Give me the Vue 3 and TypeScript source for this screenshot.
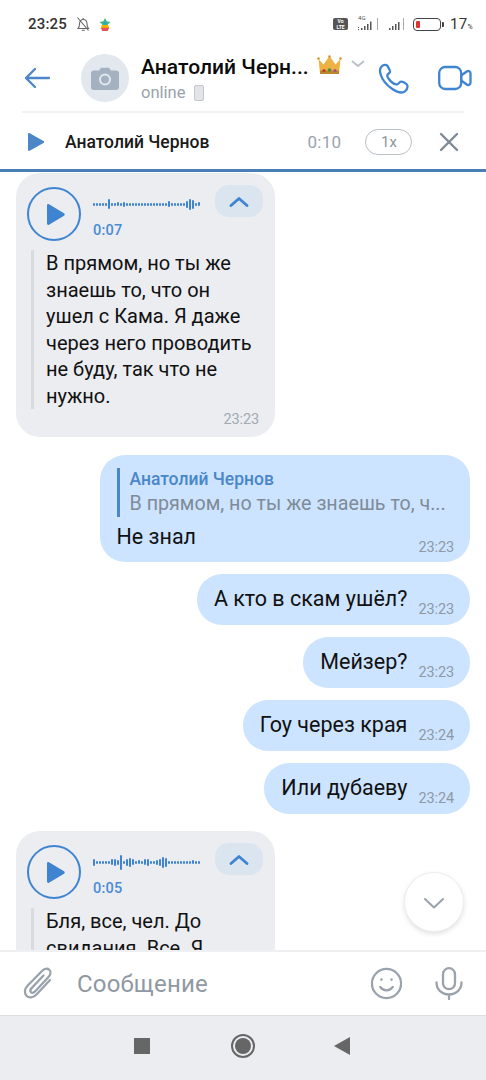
<script setup lang="ts">
const wave1: number[] = [3,3,3,3,3,10,3,3,4,3,5,3,3,3,3,3,3,3,3,3,3,3,3,3,3,6,3,3,3,3,3,7,11,9,3,4]
const wave2: number[] = [7,3,3,3,3,3,6,7,5,15,3,7,9,6,3,4,3,6,7,3,3,5,7,11,9,3,3,3,3,3,3,3,3,4,3,3]
interface Msg { text: string; time: string }
const outgoing: Msg[] = [
  { text: 'А кто в скам ушёл?', time: '23:23' },
  { text: 'Мейзер?', time: '23:23' },
  { text: 'Гоу через края', time: '23:24' },
  { text: 'Или дубаеву', time: '23:24' },
]
</script>

<template>
  <div class="phone">
    <div class="status">
      <div class="status-left">
        <span class="clock">23:25</span>
        <svg width="16" height="16" viewBox="0 0 16 16" fill="none" stroke="#666" stroke-width="1.1">
          <path d="M3 12.500c1.200-1.300 1.500-2.500 1.500-4.500 0-2.600 1.500-4.500 3.700-4.500S12 5.400 12 8c0 2 .4 3.200 1.500 4.500zM6.800 14.300h3M8.200 2v1.500M2.500 1.500l11 13"/>
        </svg>
        <svg class="play-logo" width="12" height="13" viewBox="0 0 13 14">
          <path d="M6.500 0l1.800 3.600 4 .6-2.900 2.800.7 3.500H2.900l.7-3.500L.7 4.200l4-.6z" fill="#3cb878"/>
          <path d="M3 7.500h7l1 3.500H2z" fill="#f4b400"/>
          <path d="M2 10.500h9L9.500 14h-6z" fill="#e8505b"/>
          <path d="M5 4h3v3H5z" fill="#2aa5d8"/>
        </svg>
      </div>
      <div class="status-right">
        <span class="volte">Vo<br />LTE</span>
        <span class="net"><i>4G</i><svg width="26" height="14" viewBox="0 0 26 14" fill="#555"><path d="M1 10h1v1H1zM1 12h1v1H1zM4 11h1.500v2H4zM7 9h1.500v4H7zM10 7h1.500v6H10zM13 4.500h1.500V13H13z"/><path d="M20 1h1v12h-1z" fill="#aaa"/></svg></span>
        <svg width="19" height="14" viewBox="0 0 19 14" fill="#555"><path d="M1 11h1.500v2H1zM4 9h1.500v4H4zM7 7h1.500v6H7zM10 5h1.500v8H10z"/><path d="M15 1h1v12h-1z" fill="#aaa"/></svg>
        <span class="battery"><span class="battery-level"></span></span>
        <span class="battery-cap"></span>
        <span class="percent">17<small>%</small></span>
      </div>
    </div>

    <header class="header">
      <svg class="back" width="28" height="28" viewBox="0 0 28 28" fill="none" stroke="#4a86c8" stroke-width="2.300" stroke-linecap="round" stroke-linejoin="round">
        <path d="M26 14H3M12 5l-9 9 9 9"/>
      </svg>
      <div class="avatar">
        <svg width="28" height="23" viewBox="0 0 28 23">
          <path d="M3 3.500h5L10 .8h8l2 2.700h5a3 3 0 0 1 3 3V20a3 3 0 0 1-3 3H3a3 3 0 0 1-3-3V6.500a3 3 0 0 1 3-3z" fill="#a3b1c1"/>
          <circle cx="14" cy="12.500" r="5" fill="none" stroke="#e3e8ee" stroke-width="2"/>
        </svg>
      </div>
      <div class="who">
        <div class="name-row">
          <span class="name">Анатолий Черн...</span>
          <svg class="crown" width="25" height="20" viewBox="0 0 25 20">
            <path d="M1.500 4l5 5.500L12.500 1l6 8.500 5-5.500-1.500 14.500H3z" fill="#eeb244"/>
            <path d="M3 15.500h19v3.500H3z" fill="#b8862b"/>
            <circle cx="7" cy="15.500" r="1.600" fill="#c0392b"/>
            <circle cx="12.500" cy="15" r="1.800" fill="#4a8f3c"/>
            <circle cx="18" cy="15.500" r="1.600" fill="#b04a8a"/>
            <circle cx="1.500" cy="3.500" r="1.300" fill="#d9962c"/>
            <circle cx="12.500" cy="1.500" r="1.300" fill="#d9962c"/>
            <circle cx="23.500" cy="3.500" r="1.300" fill="#d9962c"/>
          </svg>
          <svg class="caret" width="14" height="8" viewBox="0 0 14 8" fill="none" stroke="#b9bfc6" stroke-width="1.800" stroke-linecap="round" stroke-linejoin="round">
            <path d="M1.500 1.500L7 6l5.500-4.500"/>
          </svg>
        </div>
        <div class="online">online<span class="device"></span></div>
      </div>
      <svg class="call" width="32" height="32" viewBox="0 0 32 32" fill="none" stroke="#3f84d0" stroke-width="2.300" stroke-linejoin="round" stroke-linecap="round">
        <path d="M3.500 3.500c1.500-1.500 3.500-1.800 5-1.300 1.200.4 3.800 5.300 3.500 6.800-.3 1.300-2.500 1.800-2.700 3.300-.2 1.800 1.800 4.300 3.800 6.300s4.500 3 6.200 2.700c1.500-.2 2.200-2.600 3.500-2.700 1.800-.2 6.200 2.300 6.500 3.700.4 1.700-.3 4.500-2.300 6-2.500 1.900-7.600 1.100-13-2.500C8.500 22 4 16 2.500 11c-.8-2.800-.3-6 1-7.500z"/>
      </svg>
      <svg class="video" width="34" height="26" viewBox="0 0 34 26" fill="none" stroke="#3f84d0" stroke-width="2.300" stroke-linejoin="round">
        <rect x="1.200" y="2" width="22" height="22" rx="6"/>
        <path d="M23.200 10.500l5.500-4c1.800-1.200 3.800 0 3.800 2v9c0 2-2 3.200-3.800 2l-5.500-4z"/>
      </svg>
    </header>

    <div class="player">
      <svg class="player-play" width="16" height="18" viewBox="0 0 16 18"><path d="M0 1.200v15.600c0 1 .9 1.400 1.700 1L15.500 10c.7-.4.700-1.500 0-2L1.700.3C.9-.2 0 .2 0 1.200z" fill="#4a86c8"/></svg>
      <span class="player-name">Анатолий Чернов</span>
      <span class="player-time">0:10</span>
      <span class="speed">1x</span>
      <svg class="player-close" width="20" height="20" viewBox="0 0 20 20" stroke="#7f8a96" stroke-width="2.400" stroke-linecap="round"><path d="M2 2l16 16M18 2L2 18"/></svg>
    </div>

    <main class="list">
      <article class="voice first">
        <div class="voice-top">
          <span class="circle"><svg width="18" height="21" viewBox="0 0 18 21"><path d="M0 1.500v18c0 1.200 1 1.700 2 1.200l15-9c.9-.6.900-1.800 0-2.400L2 .3C1 -.2 0 .3 0 1.500z" fill="#3f84d0"/></svg></span>
          <div class="wave-col">
            <div class="wave"><i v-for="(h, i) in wave1" :key="i" :style="{ height: h + 'px' }"></i></div>
            <span class="dur">0:07</span>
          </div>
          <span class="collapse"><svg width="20" height="11" viewBox="0 0 20 11" fill="none" stroke="#3f84d0" stroke-width="2.800" stroke-linecap="round" stroke-linejoin="round"><path d="M2 9.500l8-7 8 7"/></svg></span>
        </div>
        <div class="transcript">В прямом, но ты же знаешь то, что он ушел с Кама. Я даже через него проводить не буду, так что не нужно.</div>
        <time class="stamp in">23:23</time>
      </article>

      <article class="bubble reply">
        <div class="quote">
          <div class="quote-name">Анатолий Чернов</div>
          <div class="quote-text">В прямом, но ты же знаешь то, ч...</div>
        </div>
        <div class="line"><span>Не знал</span><time class="stamp">23:23</time></div>
      </article>

      <article v-for="m in outgoing" :key="m.text" class="bubble short">
        <div class="line"><span>{{ m.text }}</span><time class="stamp">{{ m.time }}</time></div>
      </article>

      <article class="voice last">
        <div class="voice-top">
          <span class="circle"><svg width="18" height="21" viewBox="0 0 18 21"><path d="M0 1.500v18c0 1.200 1 1.700 2 1.200l15-9c.9-.6.900-1.800 0-2.400L2 .3C1 -.2 0 .3 0 1.500z" fill="#3f84d0"/></svg></span>
          <div class="wave-col">
            <div class="wave"><i v-for="(h, i) in wave2" :key="i" :style="{ height: h + 'px' }"></i></div>
            <span class="dur">0:05</span>
          </div>
          <span class="collapse"><svg width="20" height="11" viewBox="0 0 20 11" fill="none" stroke="#3f84d0" stroke-width="2.800" stroke-linecap="round" stroke-linejoin="round"><path d="M2 9.500l8-7 8 7"/></svg></span>
        </div>
        <div class="transcript">Бля, все, чел. До свидания. Все. Я</div>
      </article>

      <button class="to-bottom" type="button" aria-label="Вниз">
        <svg width="22" height="13" viewBox="0 0 22 13" fill="none" stroke="#99a2ad" stroke-width="2" stroke-linecap="round" stroke-linejoin="round"><path d="M2 2l9 8.500L20 2"/></svg>
      </button>
    </main>

    <footer class="composer">
      <svg width="32" height="34" viewBox="0 0 32 34" fill="none" stroke="#99a2ad" stroke-width="2.300" stroke-linecap="round" stroke-linejoin="round">
        <path d="M27 13L13.500 27.500c-3 3.200-7.500 3.800-10 1.300-2.500-2.500-2-6.800 1-10L19 4c2.300-2.400 5.500-3 7.300-1.200 1.900 1.900 1.300 5-1 7.500L12 24.500c-1.300 1.400-3 1.700-4 .7-1-1-.7-2.700.6-4.100L20.500 8.500"/>
      </svg>
      <span class="placeholder">Сообщение</span>
      <svg class="smile" width="33" height="33" viewBox="0 0 34 34" fill="none" stroke="#99a2ad" stroke-width="2.300" stroke-linecap="round">
        <circle cx="17" cy="17" r="15"/>
        <path d="M10.500 20.500c1.500 2.300 3.800 3.500 6.500 3.500s5-1.200 6.500-3.500"/>
        <circle cx="11.800" cy="13" r="1.300" fill="#99a2ad" stroke="none"/>
        <circle cx="22.200" cy="13" r="1.300" fill="#99a2ad" stroke="none"/>
      </svg>
      <svg class="mic" width="28" height="33" viewBox="0 0 28 33" fill="none" stroke="#99a2ad" stroke-width="2.300" stroke-linecap="round">
        <rect x="8" y="1.200" width="12" height="21" rx="6"/>
        <path d="M1.500 15.500c0 7 5.500 12 12.500 12s12.500-5 12.500-12M14 27.500V32"/>
      </svg>
    </footer>

    <nav class="nav">
      <span class="nav-square"></span>
      <span class="nav-home"><span></span></span>
      <span class="nav-back"></span>
    </nav>
  </div>
</template>

<style>
html, body { margin: 0; background: #fff; }
</style>

<style scoped>
.phone { position: relative; width: 486px; height: 1080px; overflow: hidden; background: #fff; font-family: Roboto, "Noto Sans", sans-serif; color: #111; display: flex; flex-direction: column; }

.status { height: 45px; box-sizing: border-box; padding: 3px 13px 0 28px; display: flex; justify-content: space-between; align-items: center; flex: none; }
.status-left { display: flex; align-items: center; gap: 8px; }
.clock { font-size: 15px; font-weight: 500; color: #333; letter-spacing: .2px; }
.play-logo { margin-left: 0; }
.status-right { display: flex; align-items: center; gap: 5px; }
.volte { width: 15px; height: 12px; border-radius: 2px; background: #555; color: #fff; font-size: 5px; line-height: 6px; font-weight: 700; text-align: center; margin-right: 4px; }
.net { position: relative; display: flex; }
.net i { position: absolute; left: 1px; top: -3px; font-size: 6px; font-style: normal; color: #555; }
.battery { width: 24px; height: 11px; border: 1.500px solid #444; border-radius: 4px; box-sizing: content-box; display: flex; align-items: center; padding-left: 2px; margin-left: 1px; }
.battery-level { width: 4px; height: 7px; background: #e0322f; border-radius: 1px; }
.battery-cap { width: 2px; height: 5px; background: #444; margin-left: -4px; border-radius: 0 1px 1px 0; }
.percent { font-size: 15px; color: #333; letter-spacing: .3px; margin-left: 1px; }
.percent small { font-size: 7px; }

.header { height: 68px; flex: none; box-sizing: border-box; margin: 0 22px; border-bottom: 2px solid #f0f1f3; display: flex; align-items: center; position: relative; }
.back { margin: 0 0 0 1px; flex: none; }
.avatar { width: 48px; height: 48px; border-radius: 50%; background: #e3e8ee; display: flex; align-items: center; justify-content: center; margin-left: 30px; flex: none; }
.who { margin-left: 12px; flex: 1; min-width: 0; padding-top: 1px; }
.name-row { display: flex; align-items: center; height: 27px; }
.name { font-size: 21px; font-weight: 500; color: #0b0b0b; white-space: nowrap; letter-spacing: .05px; }
.crown { margin-left: 8px; margin-top: -4px; flex: none; }
.caret { margin-left: 9px; margin-top: -7px; flex: none; }
.online { font-size: 16.500px; color: #99a2ad; display: flex; align-items: center; height: 22px; margin-top: 1px; }
.device { width: 8px; height: 14px; border: 1.500px solid #c4c8cd; background: #e2e4e7; border-radius: 2px; margin-left: 9px; box-sizing: content-box; }
.call { flex: none; margin: 2px 28px 0 0; }
.video { flex: none; margin: 0 -8px 0 0; }

.player { height: 56px; flex: none; display: flex; align-items: center; box-sizing: border-box; padding: 1px 0 0 28px; position: relative; }
.player-name { font-size: 17.500px; font-weight: 500; color: #1a1a1a; margin-left: 21px; }
.player-time { font-size: 17px; color: #99a2ad; margin-left: 98px; letter-spacing: .3px; width: 42px; }
.speed { width: 45px; height: 24px; border: 1.500px solid #b9bfc6; border-radius: 13px; font-size: 15px; color: #8b949e; display: flex; align-items: center; justify-content: center; margin-left: 16px; box-sizing: content-box; }
.player-close { margin-left: 27px; flex: none; }

.list { flex: 1; min-height: 0; border-top: 3px solid #4a7fb5; position: relative; overflow: hidden; display: flex; flex-direction: column; align-items: flex-end; padding: 1px 16px 0; }

.voice { align-self: flex-start; width: 259px; background: #ebedf1; border-radius: 24px; box-sizing: border-box; padding: 13px 12px 0 11px; position: relative; flex: none; }
.voice.first { height: 264px; }
.voice.last { margin-top: 17px; height: 140px; }
.voice-top { display: flex; align-items: flex-start; }
.circle { width: 54px; height: 54px; box-sizing: border-box; border: 2px solid #3f84d0; border-radius: 50%; display: flex; align-items: center; justify-content: center; padding-left: 3px; flex: none; margin-top: 1px; }
.wave-col { margin-left: 12px; width: 108px; flex: none; }
.wave { height: 26px; margin-top: 5px; display: flex; align-items: center; gap: 1px; }
.wave i { display: block; width: 2px; background: #3f84d0; border-radius: 1px; flex: none; }
.dur { display: block; font-size: 14.500px; font-weight: 500; color: #4a8bd4; margin-top: 5px; letter-spacing: .2px; }
.collapse { width: 48px; height: 32px; background: #dbe5f0; border-radius: 14px; display: flex; align-items: center; justify-content: center; margin-left: 14px; margin-top: -1px; flex: none; }
.transcript { margin: 9px 0 0 4px; padding: 0 8px 0 12px; border-left: 3px solid #d8dbe0; font-size: 20px; line-height: 26.500px; color: #111; }
.first .transcript { height: 159px; }

.stamp { font-size: 14.500px; color: #8e99a6; white-space: nowrap; letter-spacing: -.1px; }
.stamp.in { position: absolute; right: 16px; bottom: 9px; color: #a2a9b2; }

.bubble { background: #cce4ff; border-radius: 25px; box-sizing: border-box; flex: none; }
.reply { margin-top: 18px; width: 370px; height: 107px; padding: 13px 16px 0 16.500px; }
.quote { border-left: 3px solid #4a86c8; padding-left: 10px; height: 49px; box-sizing: border-box; }
.quote-name { font-size: 17.500px; font-weight: 500; color: #4a86c8; line-height: 22px; }
.quote-text { font-size: 19.700px; color: #808b98; line-height: 27px; white-space: nowrap; }
.line { display: flex; justify-content: space-between; font-size: 21.500px; line-height: 26px; }
.reply .line { margin-top: 7px; }
.line .stamp { line-height: 16px; align-self: flex-end; margin-bottom: -6px; margin-left: 11px; }
.short { margin-top: 12px; height: 51px; padding: 12px 16px 0 17px; }

.to-bottom { position: absolute; left: 404px; top: 700px; width: 60px; height: 60px; border-radius: 50%; background: #fff; border: 1px solid #eceef0; box-shadow: 0 2px 5px rgba(0,0,0,.12); display: flex; align-items: center; justify-content: center; padding: 0; }
.to-bottom svg { margin-top: 2px; }

.composer { height: 66px; flex: none; box-sizing: border-box; border-top: 2px solid #eef0f2; border-bottom: 1px solid #dcdee1; background: #fff; display: flex; align-items: center; padding: 0 23px; }
.placeholder { font-size: 24px; color: #8f98a3; margin-left: 22px; flex: 1; letter-spacing: .2px; }
.smile { flex: none; margin-right: 32px; }
.mic { flex: none; }

.nav { height: 64px; flex: none; background: #ebedf1; position: relative; display: flex; align-items: center; padding: 0 0 4px 134px; box-sizing: border-box; }
.nav-square { width: 16px; height: 16px; background: #666; flex: none; }
.nav-home { width: 24px; height: 24px; border: 2px solid #666; border-radius: 50%; box-sizing: border-box; display: flex; align-items: center; justify-content: center; margin-left: 81px; flex: none; }
.nav-home span { width: 16px; height: 16px; border-radius: 50%; background: #666; }
.nav-back { width: 0; height: 0; border-top: 9px solid transparent; border-bottom: 9px solid transparent; border-right: 16px solid #666; margin-left: 79px; flex: none; }
</style>
